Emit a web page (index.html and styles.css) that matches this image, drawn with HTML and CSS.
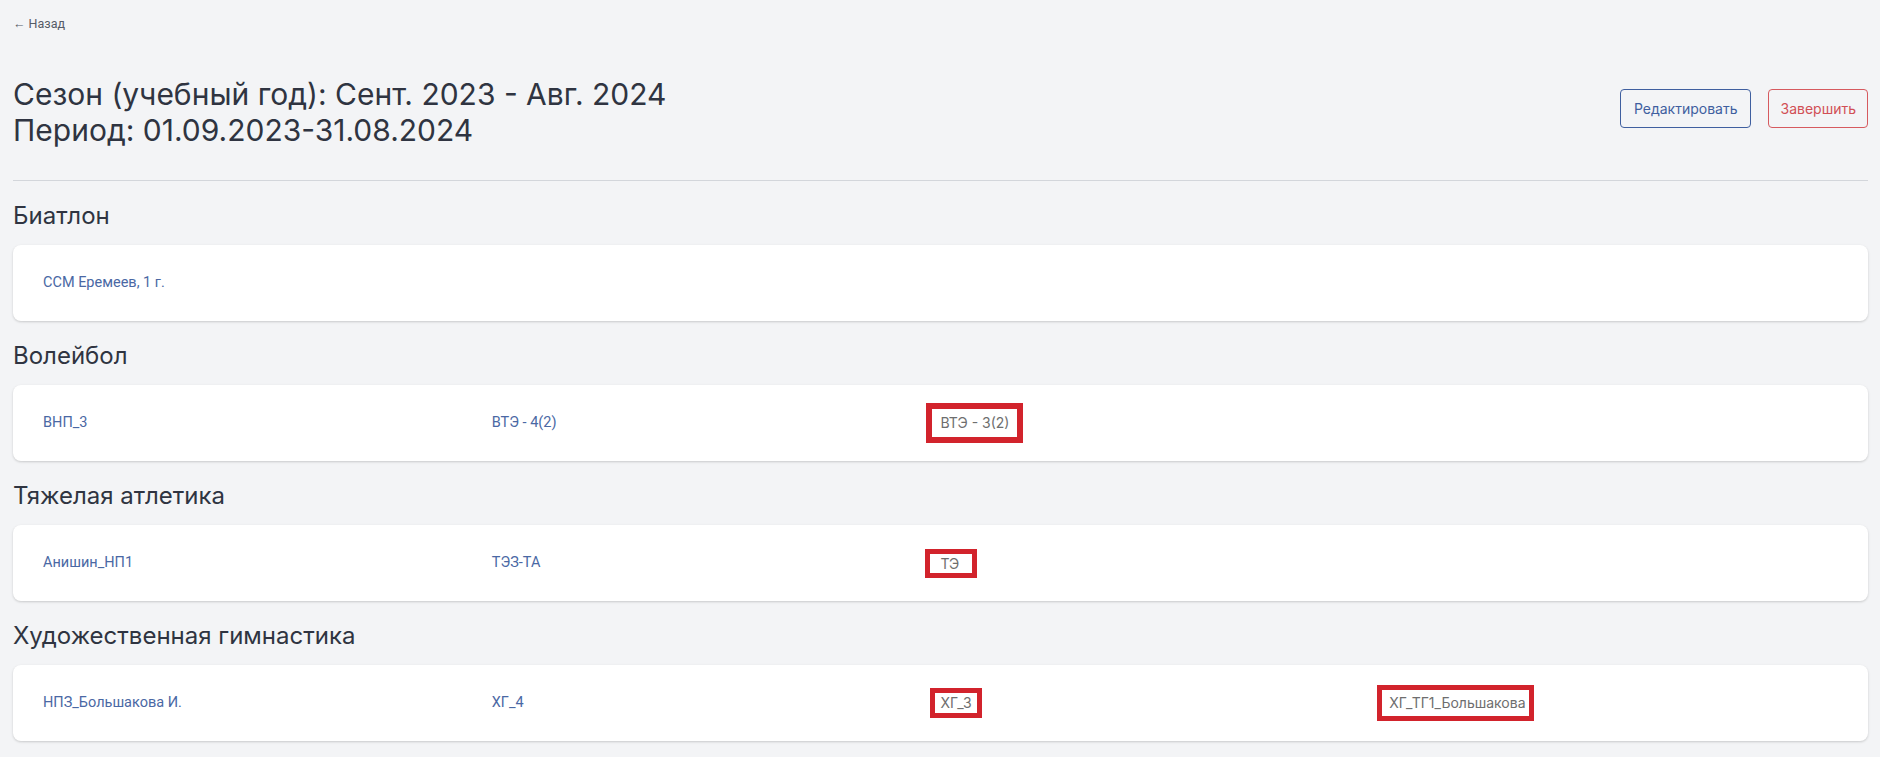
FILE: index.html
```html
<!DOCTYPE html>
<html lang="ru">
<head>
<meta charset="utf-8">
<title>Сезон</title>
<link rel="stylesheet" href="styles.css">
</head>
<body>
<div class="page">
  <a class="back" href="#">← Назад</a>
  <div class="header">
    <h1 class="title">Сезон (учебный год): Сент. 2023 - Авг. 2024<br>Период: 01.09.2023-31.08.2024</h1>
    <div class="actions">
      <button class="btn btn-edit">Редактировать</button>
      <button class="btn btn-finish">Завершить</button>
    </div>
  </div>
  <hr class="sep">

  <section class="sport">
    <h2 class="sport-title">Биатлон</h2>
    <div class="card">
      <div class="cell"><a class="group" href="#">ССМ Еремеев, 1 г.</a></div>
    </div>
  </section>

  <section class="sport">
    <h2 class="sport-title">Волейбол</h2>
    <div class="card">
      <div class="cell"><a class="group" href="#">ВНП_3</a></div>
      <div class="cell"><a class="group" href="#">ВТЭ - 4(2)</a></div>
      <div class="cell"><span class="group plain mark mark-a">ВТЭ - 3(2)</span></div>
    </div>
  </section>

  <section class="sport">
    <h2 class="sport-title">Тяжелая атлетика</h2>
    <div class="card">
      <div class="cell"><a class="group" href="#">Анишин_НП1</a></div>
      <div class="cell"><a class="group" href="#">ТЭЗ-ТА</a></div>
      <div class="cell"><span class="group plain mark mark-b">ТЭ</span></div>
    </div>
  </section>

  <section class="sport">
    <h2 class="sport-title">Художественная гимнастика</h2>
    <div class="card">
      <div class="cell"><a class="group" href="#">НПЗ_Большакова И.</a></div>
      <div class="cell"><a class="group" href="#">ХГ_4</a></div>
      <div class="cell"><span class="group plain mark mark-c">ХГ_3</span></div>
      <div class="cell"><span class="group plain mark mark-d">ХГ_ТГ1_Большакова</span></div>
    </div>
  </section>
</div>
</body>
</html>
```

FILE: styles.css
```css
* { box-sizing: border-box; }
html, body { margin: 0; padding: 0; }
body {
  background: #f3f4f6;
  font-family: Inter, "Noto Sans", "DejaVu Sans", sans-serif;
  color: #2f3441;
  width: 1880px;
  height: 757px;
  overflow: hidden;
}
.page {
  padding: 16px 12px 0 13px;
}
.back {
  display: block;
  font-family: Roboto, "Liberation Sans", sans-serif;
  font-size: 12.5px;
  line-height: 16px;
  color: #555b66;
  text-decoration: none;
}
.header {
  display: flex;
  justify-content: space-between;
  align-items: flex-start;
  margin-top: 44px;
}
.title {
  margin: 0;
  font-size: 30px;
  font-weight: 400;
  line-height: 36px;
  color: #2f3441;
}
.actions {
  display: flex;
  gap: 17px;
  margin-top: 13px;
}
.btn {
  height: 39px;
  padding: 0 13px;
  background: transparent;
  border: 1px solid;
  border-radius: 4px;
  font-family: inherit;
  font-size: 14px;
  cursor: pointer;
}
.btn-edit { border-color: #3f5f9f; color: #3f5f9f; }
.btn-finish { border-color: #d65a5f; color: #d14f55; padding: 0 11px; }
.sep {
  margin: 32px 0 0;
  border: 0;
  border-top: 1px solid #d3d6db;
}
.sport-title {
  margin: 20px 0 14px;
  font-size: 24px;
  font-weight: 400;
  line-height: 30px;
  color: #2f3441;
}
.card {
  display: grid;
  grid-template-columns: repeat(4, 1fr);
  align-items: center;
  height: 76px;
  padding: 0 30px;
  background: #fff;
  border-radius: 8px;
  box-shadow: 0 1px 3px rgba(0, 0, 0, 0.12), 0 1px 2px rgba(0, 0, 0, 0.06);
}
.cell {
  font-family: Roboto, "Liberation Sans", sans-serif;
  font-size: 14.5px;
  line-height: 16px;
}
.group {
  color: #4a68a4;
  text-decoration: none;
}
.plain {
  font-family: Inter, "Noto Sans", sans-serif;
  font-size: 14px;
  color: #6e6e6e;
}
.mark {
  display: inline-block;
  border: 5px solid #d2232c;
}
.mark-a { border-width: 6px; padding: 6px 8px 6px 9px; margin-left: -15px; }
.mark-b { padding: 2px 13px 1px 11px; margin-left: -16px; }
.mark-c { padding: 2px 5px 2px 6px; margin-left: -11px; }
.mark-d { padding: 5px 3px 5px 7px; margin-left: -12px; }
```
